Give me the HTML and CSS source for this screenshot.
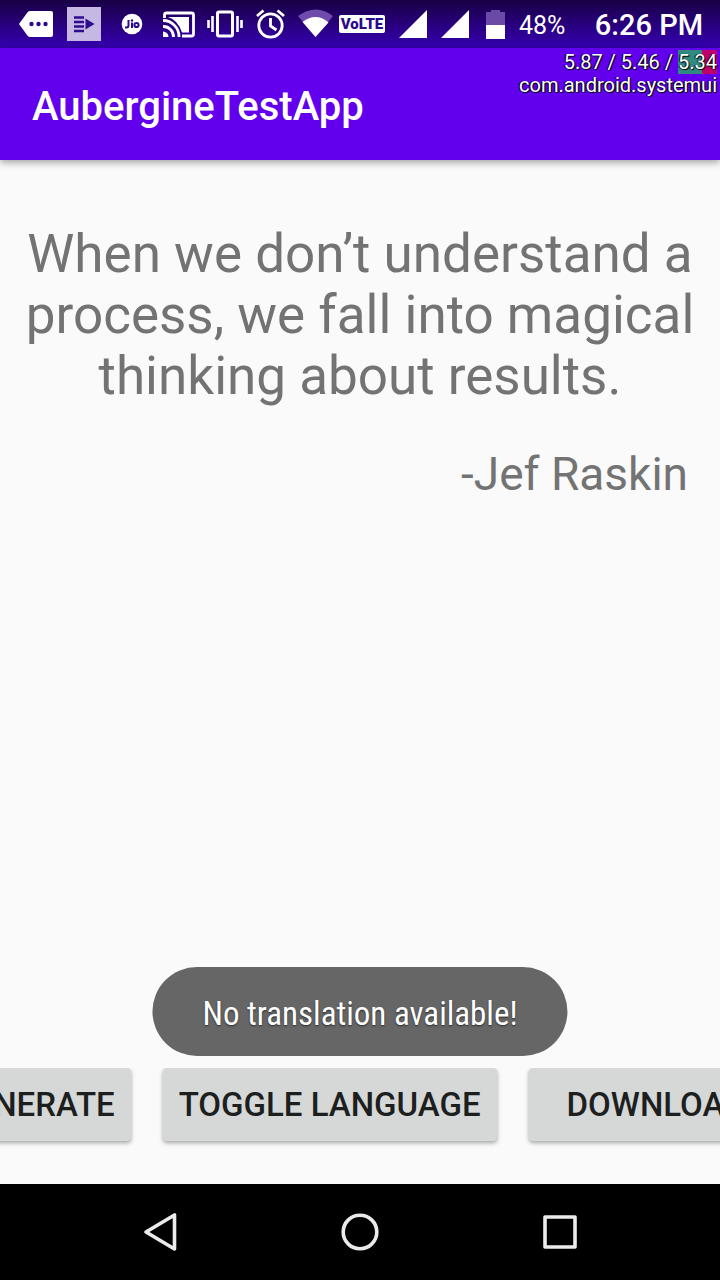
FILE: index.html
```html
<!DOCTYPE html>
<html lang="en">
<head>
<meta charset="utf-8">
<meta name="viewport" content="width=device-width, initial-scale=1">
<title>AubergineTestApp</title>
<link rel="stylesheet" href="styles.css">
</head>
<body class="screen">
<div class="status-bar">
  <div class="status-icons">
    <svg class="slot-wide" viewBox="0 0 48 48" aria-hidden="true"><path d="M7 24l8-11q1-2 3-2h21q2 0 2 2v22q0 2-2 2H18q-2 0-3-2z" fill="#fff"/><g fill="#2b0a8c"><circle cx="19.500" cy="24" r="2.200"/><circle cx="26.500" cy="24" r="2.200"/><circle cx="33.500" cy="24" r="2.200"/></g></svg>
    <svg class="slot-wide" viewBox="0 0 48 48" aria-hidden="true"><path d="M7 7h34v34H7z" fill="#c5b9e3"/><path d="M14 17.500h10M14 22h10M14 26.500h10M14 31h10" stroke="#2e0b8f" stroke-width="2.600"/><path d="M25.500 18.500v11l9-5.500z" fill="#2e0b8f"/></svg>
    <svg class="slot-wide" viewBox="0 0 48 48" aria-hidden="true"><circle cx="24" cy="24" r="10.300" fill="#fff"/><g fill="none" stroke="#2b0a8c" stroke-width="2"><path d="M20.500 20v5.500q0 2-2 2h-1.500M24 22.500v5.500"/><circle cx="28.500" cy="25" r="2.100"/></g><circle cx="24" cy="20.500" r="1.200" fill="#2b0a8c"/></svg>
    <svg class="slot" viewBox="0 0 46 48" aria-hidden="true"><g fill="none" stroke="#fff" stroke-width="2.800"><path d="M8.500 18v-3q0-2 2-2h25q2 0 2 2v19q0 2-2 2H26"/><path d="M7 20.500A16 16 0 0 1 23 37M7 26.500A10 10 0 0 1 17.500 37"/></g><path d="M12 17h21v15.500h-7Q22 20 12 17zM7 31.500a5.500 5.500 0 0 1 5.500 5.500H7z" fill="#fff"/></svg>
    <svg class="slot" viewBox="0 0 46 48" aria-hidden="true"><rect x="15.500" y="12" width="15" height="24" rx="1.500" fill="none" stroke="#fff" stroke-width="3"/><path d="M10.500 16v16M6.500 20v8M35.500 16v16M39.500 20v8" stroke="#fff" stroke-width="2.600"/></svg>
    <svg class="slot" viewBox="0 0 46 48" aria-hidden="true"><g fill="none" stroke="#fff" stroke-width="2.800"><circle cx="22.500" cy="25.500" r="11.700"/><path d="M22.500 18v8l6 4M9 16l6.500-5.500M36 16l-6.500-5.500"/></g></svg>
    <svg class="slot" viewBox="0 0 46 48" aria-hidden="true"><path d="M4 16Q22 3 39 16L21.500 37z" fill="#6e4bac"/><path d="M8.500 22Q22 12 34.500 22.500L21.500 37z" fill="#fff"/></svg>
    <span class="volte">VoLTE</span>
    <svg class="signal" viewBox="0 0 42 48" aria-hidden="true"><path d="M6 38L34 10v28z" fill="#fff"/></svg>
    <svg class="signal" viewBox="0 0 42 48" aria-hidden="true"><path d="M6 38L34 10v28z" fill="#fff"/></svg>
    <svg class="battery" viewBox="0 0 36 48" aria-hidden="true"><path d="M9 12h5v-2h9v2h5v14H9z" fill="#6a4aa6"/><path d="M9 25h19v14H9z" fill="#fff"/></svg>
  </div>
  <span class="percent">48%</span>
  <time class="clock">6:26 PM</time>
</div>
<header class="app-bar">
  <h1 class="title">AubergineTestApp</h1>
  <div class="load-overlay">
    <div>5.87 / 5.46 / <span class="load-now">5.34</span></div>
    <div>com.android.systemui</div>
  </div>
</header>
<main class="content">
  <blockquote class="quote">When we don’t understand a process, we fall into magical thinking about results.</blockquote>
  <p class="author">-Jef Raskin</p>
  <div class="actions">
    <button class="action" type="button">GENERATE</button>
    <button class="action" type="button">TOGGLE LANGUAGE</button>
    <button class="action action-roomy" type="button">DOWNLOAD</button>
  </div>
  <div class="toast" role="status">No translation available!</div>
</main>
<nav class="nav-bar">
  <button class="nav-button" type="button" aria-label="Back"><svg viewBox="0 0 40 40"><path d="M34.500 3v34L6 20z"/></svg></button>
  <button class="nav-button" type="button" aria-label="Home"><svg viewBox="0 0 40 40"><circle cx="20" cy="20" r="16.800"/></svg></button>
  <button class="nav-button" type="button" aria-label="Overview"><svg viewBox="0 0 40 40"><path d="M5 5h30v30H5z"/></svg></button>
</nav>
</body>
</html>
```
FILE: styles.css
```css
* { box-sizing: border-box; }

.screen {
  margin: 0;
  min-height: 100vh;
  display: flex;
  flex-direction: column;
  overflow-x: hidden;
  background: #fafafa;
  font-family: Roboto, "Noto Sans", sans-serif;
}

.status-bar {
  height: 48px;
  padding: 0 17px 0 12px;
  display: flex;
  align-items: center;
  background: linear-gradient(#180044, #3700b3);
  color: #fff;
}

.status-icons { display: flex; align-items: center; flex: none; }
.status-icons svg { height: 48px; flex: none; }
.slot-wide { width: 48px; }
.slot { width: 46px; }
.signal { width: 42px; }
.battery { width: 36px; }

.volte {
  width: 46px;
  height: 18px;
  margin: 0 8px 0 -1px;
  border-radius: 2px;
  background: #fff;
  color: #2b0a8c;
  font-size: 15px;
  font-weight: 900;
  line-height: 18px;
  text-align: center;
}

.percent { margin-left: 6px; padding-top: 2px; font-size: 25px; }
.clock { margin-left: auto; padding-top: 2px; font-size: 29px; font-weight: 500; }

.app-bar {
  position: relative;
  z-index: 1;
  height: 112px;
  padding: 4px 32px 0;
  display: flex;
  align-items: center;
  background: #6200ee;
  color: #fff;
  box-shadow: 0 2px 8px rgba(0, 0, 0, 0.4);
}

.title { margin: 0; font-size: 40px; font-weight: 500; }

.load-overlay {
  position: absolute;
  top: 3px;
  right: 3px;
  font-size: 20px;
  line-height: 23px;
  text-align: right;
  text-shadow: 1px 1px 1px #000, -1px 0 1px #000;
}

.load-now { background: linear-gradient(90deg, #2f8a80 62%, #c0006a 62%); }

.content {
  position: relative;
  flex: 1;
  padding: 64px 16px 43px;
  display: flex;
  flex-direction: column;
  color: #737373;
}

.quote {
  margin: 0;
  font-size: 53px;
  line-height: 61px;
  text-align: center;
}

.author {
  margin: 40px 16px 0;
  font-size: 46px;
  line-height: 54px;
  text-align: right;
}

.actions {
  margin: auto -16px -8px;
  padding-bottom: 8px;
  display: flex;
  justify-content: center;
  gap: 32px;
  overflow: hidden;
}

.action {
  flex: none;
  height: 73px;
  padding: 0 16px;
  border: 0;
  border-radius: 4px;
  background: #d6d7d7;
  color: #1d1e1e;
  box-shadow: 0 2px 4px rgba(0, 0, 0, 0.35);
  font: 500 33px Roboto, sans-serif;
}

.action-roomy { padding: 0 38px; }

.toast {
  position: absolute;
  bottom: 128px;
  left: 50%;
  transform: translateX(-50%);
  padding: 28px 50px 24px;
  border-radius: 45px;
  background: #666;
  color: #fff;
  font-family: "Roboto Condensed", Roboto, sans-serif;
  font-size: 33px;
  line-height: 37px;
  white-space: nowrap;
  text-shadow: 0 1px 2px rgba(0, 0, 0, 0.6);
}

.nav-bar {
  height: 96px;
  padding: 0 60px;
  display: flex;
  background: #000;
}

.nav-button {
  flex: 1;
  padding: 0;
  border: 0;
  background: none;
  display: grid;
  place-items: center;
}

.nav-button svg {
  width: 40px;
  height: 40px;
  fill: none;
  stroke: #ebebeb;
  stroke-width: 3.6;
  stroke-linejoin: round;
}
```
